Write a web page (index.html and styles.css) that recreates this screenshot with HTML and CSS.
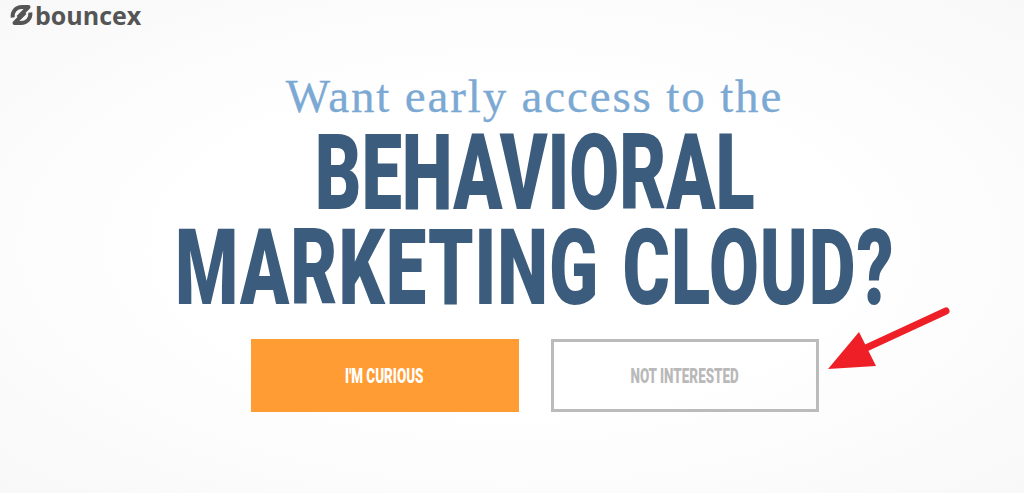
FILE: index.html
```html
<!DOCTYPE html>
<html lang="en">
<head>
<meta charset="utf-8">
<title>BounceX</title>
<link rel="stylesheet" href="styles.css">
</head>
<body>
<header class="brand">
  <svg class="brand-mark" viewBox="0 0 24 24" aria-hidden="true">
    <path class="mark-stroke" d="M3.2 14.5 C2.5 8.5 6.5 4 12.5 4 L19 4 L8.5 14.5" />
    <path class="mark-stroke" d="M20.8 9.5 C21.5 15.5 17.5 20 11.5 20 L5 20 L15.5 9.5" />
  </svg>
  <span class="brand-name">bouncex</span>
</header>
<main class="offer">
  <p class="lead">Want early access to the</p>
  <h1 class="headline">
    <span class="headline-line">BEHAVIORAL</span>
    <span class="headline-line headline-line-long">MARKETING CLOUD?</span>
  </h1>
  <div class="actions">
    <a class="btn btn-primary"><span class="btn-label">I'M CURIOUS</span></a>
    <a class="btn btn-ghost"><span class="btn-label">NOT INTERESTED</span></a>
  </div>
</main>
<svg class="arrow" viewBox="0 0 1024 493" aria-hidden="true">
  <path class="arrow-shaft" d="M866 348 L946 311" />
  <polygon class="arrow-head" points="828,369 859,332 876,366" />
</svg>
</body>
</html>
```
FILE: styles.css
```css
html, body {
  margin: 0;
  height: 100%;
  overflow: hidden;
}
body {
  position: relative;
  background: radial-gradient(ellipse at 50% 50%, #ffffff 45%, #f8f8f8 100%);
}
.brand {
  display: flex;
  align-items: center;
  gap: 1px;
  height: 30px;
  padding-left: 9px;
}
.brand-mark {
  width: 25px;
  height: 24px;
}
.mark-stroke {
  fill: none;
  stroke: #555;
  stroke-width: 4;
  stroke-linejoin: round;
}
.brand-name {
  font-family: "Open Sans", sans-serif;
  font-weight: 700;
  font-size: 25px;
  line-height: 30px;
  color: #555;
}
.offer {
  display: flex;
  flex-direction: column;
  align-items: center;
  padding: 39px 0 0 45px;
}
.lead {
  margin: 0;
  font-family: "Liberation Serif", serif;
  font-size: 47px;
  line-height: 54px;
  color: #7ba9d3;
  letter-spacing: 1.85px;
  white-space: nowrap;
  -webkit-text-stroke: 0.3px #7ba9d3;
}
.headline {
  margin: 3px 0 0;
  display: flex;
  flex-direction: column;
  align-items: center;
  font-family: Roboto, sans-serif;
  font-weight: 900;
  font-size: 105px;
  line-height: 95px;
  color: #3b5c7c;
}
.headline-line {
  display: block;
  white-space: nowrap;
  transform: scaleX(0.688);
}
.headline-line-long {
  letter-spacing: 1.5px;
  word-spacing: 6px;
}
.actions {
  display: flex;
  gap: 32px;
  margin-top: 23px;
}
.btn {
  box-sizing: border-box;
  width: 268px;
  height: 73px;
  display: flex;
  align-items: center;
  justify-content: center;
  font-family: Roboto, sans-serif;
  font-weight: 900;
  font-size: 21px;
}
.btn-label {
  display: block;
  white-space: nowrap;
  transform: scaleX(0.64);
}
.btn-primary {
  background: #ff9c33;
  color: #fff;
}
.btn-ghost {
  border: 3px solid #bbb;
  color: #b9b9b9;
}
.arrow {
  position: absolute;
  left: 0;
  top: 0;
  width: 1024px;
  height: 493px;
  pointer-events: none;
}
.arrow-shaft {
  stroke: #ee1f26;
  stroke-width: 7;
  stroke-linecap: round;
}
.arrow-head {
  fill: #ee1f26;
}
```
